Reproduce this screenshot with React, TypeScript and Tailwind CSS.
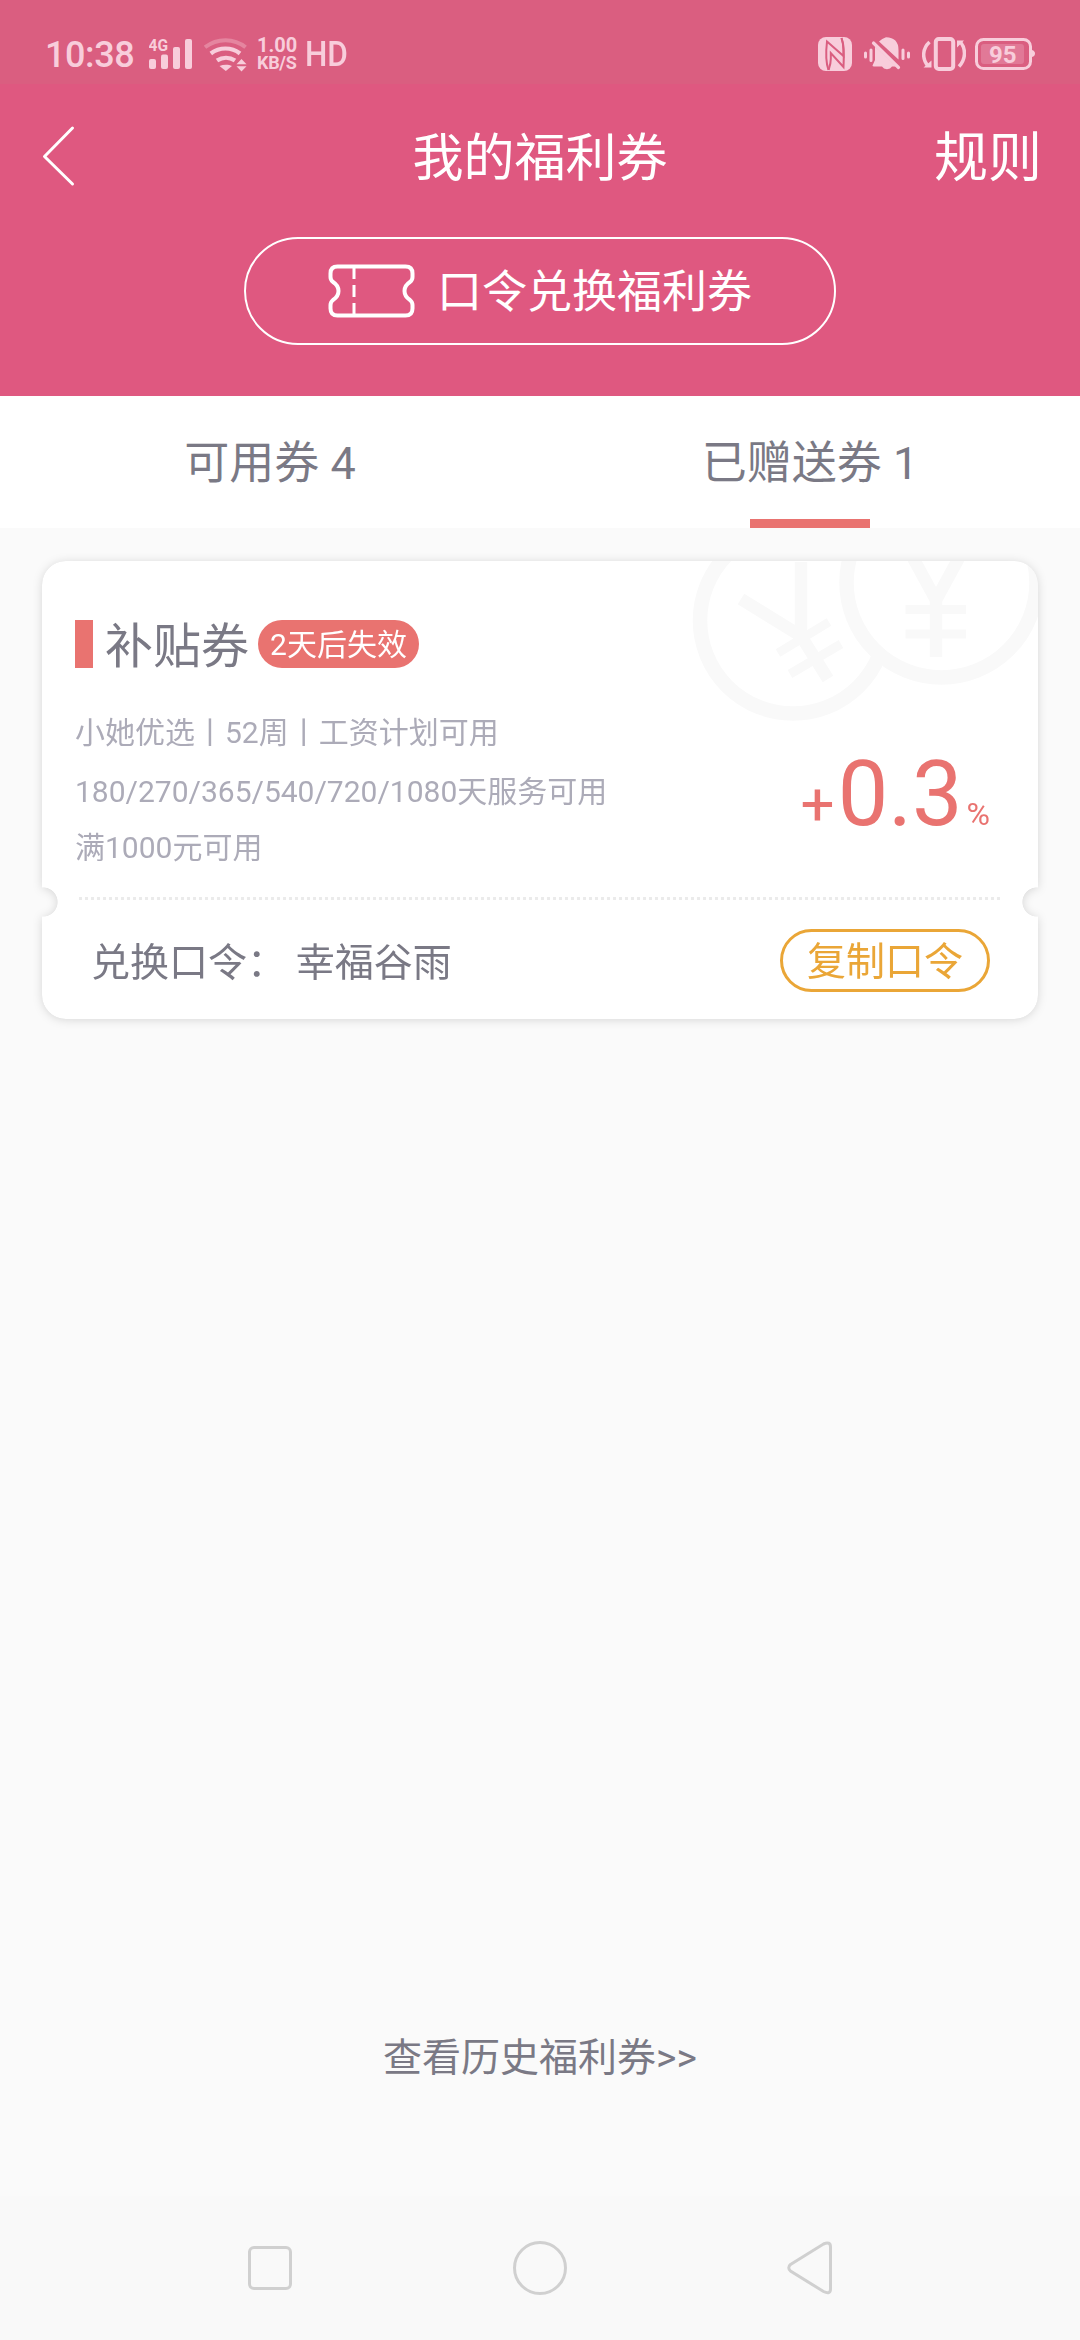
import type { ReactNode } from "react";

function SignalIcon() {
  return (
    <svg className="h-9 w-11" viewBox="149 36 44 36" fill="currentColor">
      <text x="148.5" y="51" fontSize="16.5" fontWeight="700" textLength="19.5" lengthAdjust="spacingAndGlyphs">4G</text>
      <rect x="149" y="59" width="7" height="10" rx="2" />
      <rect x="161" y="54.5" width="7" height="14.5" rx="2" />
      <rect x="173" y="47" width="7" height="22" rx="2" />
      <rect x="185" y="39" width="7" height="30" rx="2" />
    </svg>
  );
}

function WifiIcon() {
  return (
    <svg className="h-9 w-[44px]" viewBox="204 36 44 36" fill="none" stroke="currentColor">
      <path d="M205 47.3C217 37.8 234 37.8 245.6 47.3" strokeWidth="4" opacity=".35" />
      <path d="M210.8 53.5C219.5 46.8 231.5 46.8 240 53.5" strokeWidth="4.2" />
      <path d="M217 60.6C222.5 56.8 229.5 56.8 235 60.6" strokeWidth="4.2" />
      <path d="M219.5 66C223.5 64.2 228.5 64.2 232 66L225.8 71Z" fill="currentColor" stroke="none" />
      <path d="M236.5 64.3L241.5 59L246.5 64.3ZM236.5 66.3H246.5L241.5 71.5Z" fill="currentColor" stroke="none" />
    </svg>
  );
}

function NfcIcon() {
  return (
    <svg className="h-9 w-[34px]" viewBox="818 36 34 36">
      <rect x="818" y="37" width="34" height="34" rx="8" fill="currentColor" />
      <path d="M828.5 70C826 63 826 50 827 41.5L843.5 56V50C843.5 45 842.8 41.5 841.5 38" fill="none" stroke="#da5e80" strokeWidth="2" />
      <path d="M841.5 38C844.5 46 844 58 843.5 67L830.8 53V59C830.8 64 829.5 67 828.5 70" fill="none" stroke="#da5e80" strokeWidth="2" />
    </svg>
  );
}

function MutedBellIcon() {
  return (
    <svg className="h-9 w-[46px]" viewBox="864 36 46 36" fill="none" stroke="currentColor" strokeLinecap="round">
      <path d="M875 49V60L872.5 65.5Q872.5 66.5 874 66.5H882A5.5 4.5 0 0 0 892 66.5H896L875 46.5ZM879 41.5Q882 38.5 886 37.2Q898.5 37.5 898.5 50V59.5Z" fill="currentColor" stroke="none" />
      <path d="M873.5 43L898.5 67.5" strokeWidth="3.2" />
      <path d="M865.5 53V57M871 50V60.5M903 50V58.5M908.5 53V57" strokeWidth="3" />
    </svg>
  );
}

function VibrateIcon() {
  return (
    <svg className="h-9 w-11" viewBox="922 36 44 36" fill="none" stroke="currentColor">
      <rect x="935.8" y="39" width="17.4" height="30" rx="3" strokeWidth="4" />
      <path d="M929.5 42C922 49 922 59 928 66M959 66.5C966 59 966 49 960.5 42" strokeWidth="3.5" />
      <path d="M923.5 67.5H931.5V60.5ZM957 47.5V40.5H964Z" fill="currentColor" stroke="none" />
    </svg>
  );
}

function BatteryIcon() {
  return (
    <svg className="h-9 w-[60px]" viewBox="975 36 60 36">
      <rect x="976.5" y="39.5" width="54" height="29" rx="7" fill="none" stroke="currentColor" strokeWidth="3" />
      <rect x="981" y="44" width="43" height="20" rx="3" fill="currentColor" opacity=".25" />
      <path d="M1032 50Q1035 51 1035 53.5Q1035 56 1032 57Z" fill="currentColor" />
      <text x="1002.7" y="62.8" textAnchor="middle" fontSize="24" fontWeight="700" fill="currentColor">95</text>
    </svg>
  );
}

function StatusBar() {
  return (
    <div className="flex h-[84px] items-center bg-[#da5e80] px-[45px] pt-6 text-[#f8cddb]">
      <span className="w-[104px] pt-0.5 text-[36px] leading-9 font-medium tracking-[-0.4px]">10:38</span>
      <SignalIcon />
      <div className="ml-[11px] flex"><WifiIcon /></div>
      <div className="ml-[9px] w-[48px] pt-px font-bold">
        <div className="text-[20px] leading-[17px]">1.00</div>
        <div className="text-[18px] leading-[18px] tracking-[-0.3px]">KB/S</div>
      </div>
      <span className="origin-left scale-x-90 pt-0.5 text-[35px] leading-9 font-medium">HD</span>
      <div className="ml-auto flex">
        <NfcIcon />
        <div className="ml-3 flex"><MutedBellIcon /></div>
        <div className="ml-3 flex"><VibrateIcon /></div>
        <div className="ml-[9px] flex"><BatteryIcon /></div>
      </div>
    </div>
  );
}

function TicketIcon() {
  return (
    <svg className="h-[54px] w-[87px]" viewBox="0 0 87 54" fill="none" stroke="currentColor" strokeWidth="4">
      <path d="M9.5 2.5H77.5Q84.5 2.5 84.5 9.5V13Q84.5 16 82 18Q76.500 21.500 76.500 27T82 36Q84.5 38 84.5 41V44.5Q84.5 51.5 77.5 51.5H9.5Q2.5 51.5 2.5 44.5V41Q2.5 38 5 36Q10.500 32.500 10.500 27T5 18Q2.5 16 2.5 13V9.5Q2.5 2.5 9.5 2.5Z" strokeLinejoin="round" />
      <path d="M26 4V15M26 21V33M26 39V50" strokeWidth="3" />
    </svg>
  );
}

function Header() {
  return (
    <header className="h-[312px] bg-[#df5880] text-white">
      <div className="grid h-[144px] grid-cols-[1fr_auto_1fr] items-center px-[42px]">
        <svg className="h-[62px] w-[34px]" viewBox="0 0 34 62" fill="none" stroke="currentColor" strokeWidth="3" strokeLinecap="round" strokeLinejoin="round">
          <path d="M30.5 3L2.5 31.5L30.5 59" />
        </svg>
        <h1 className="pt-[5px] text-[51px] leading-[60px]">我的福利券</h1>
        <button className="-mr-1 justify-self-end pt-[5px] text-[54px] leading-[60px]">规则</button>
      </div>
      <button className="mx-auto mt-[9px] flex h-[108px] w-[592px] items-center rounded-full border-2 border-white pl-[82px]">
        <TicketIcon />
        <span className="ml-[22px] pt-1 text-[45px] leading-[54px]">口令兑换福利券</span>
      </button>
    </header>
  );
}

function Tab({ children, active }: { children: ReactNode; active?: boolean }) {
  return (
    <div className="flex flex-1 flex-col items-center justify-between">
      <span className="pt-[41px] text-[45px] leading-[54px]">{children}</span>
      {active && <span className="h-[9px] w-[120px] bg-[#e97370]" />}
    </div>
  );
}

// faint yen coins in the top right corner of the card
function Coins() {
  return (
    <svg className="absolute top-0 right-0 h-[165px] w-[358px]" viewBox="680 561 358 165" fill="none" stroke="#f9f9f9" strokeWidth="12.5">
      <circle cx="793" cy="620.5" r="93" strokeWidth="14.5" />
      <path d="M741 599L801 636L828 679M801 636V562" />
      <path d="M778 653L829 622M790 674L841 644" strokeWidth="9" />
      <circle cx="941.5" cy="582.5" r="95" fill="#fff" strokeWidth="14.5" />
      <path d="M912 556L936 600L960 556M936 596V657" />
      <path d="M905.5 609.5H966M905.5 634H966" strokeWidth="9" />
    </svg>
  );
}

// the mask cuts a round notch out of each side, level with the dotted line
function CouponCard() {
  return (
    <section className="relative mx-[42px] mt-[33px] h-[458px] overflow-hidden rounded-[24px] bg-white [mask:radial-gradient(circle_15px_at_1px_341px,transparent_95%,#000)_left/50%_100%_no-repeat,radial-gradient(circle_15px_at_calc(100%-1px)_341px,transparent_95%,#000)_right/50%_100%_no-repeat]">
      <Coins />
      <div className="relative flex h-[336px] justify-between pr-[48px] pl-[33px]">
        <div>
          <div className="flex items-center pt-[59px]">
            <span className="h-12 w-[18px] bg-[#e97370]" />
            <h2 className="ml-3 pt-[5px] text-[48px] leading-[43px]">补贴券</h2>
            <span className="ml-[9px] flex h-12 items-center rounded-full bg-[#e97370] px-3 pt-0.5 text-[30px] leading-none text-white">2天后失效</span>
          </div>
          <div className="mt-[37px] text-[30px] leading-[56px] text-[#acabb8]">
            <p>小她优选丨52周丨工资计划可用</p>
            <p className="mt-[3px]">180/270/365/540/720/1080天服务可用</p>
            <p>满1000元可用</p>
          </div>
        </div>
        <div className="flex items-baseline self-start pt-[184px] leading-[100px] text-[#e97370]">
          <span className="text-[60px] leading-none">+</span>
          <span className="ml-[3px] text-[90px]">0.3</span>
          <span className="ml-[4px] text-[32px] leading-none">%</span>
        </div>
      </div>

      <div className="mr-[37px] ml-[37px] h-[3px] bg-[repeating-linear-gradient(90deg,#ebebeb_0_3px,transparent_3px_6px)]" />

      <div className="mt-[29px] flex h-[63px] items-center justify-between pr-[48px] pl-[49px] text-[39px]">
        <p className="pt-[5px] whitespace-pre">兑换口令： 幸福谷雨</p>
        <button className="flex h-[63px] w-[210px] items-center justify-center rounded-full border-3 border-[#eaa637] pt-1 text-[#eaa637]">复制口令</button>
      </div>
    </section>
  );
}

function NavBar() {
  return (
    <nav className="flex h-[144px] items-center justify-between bg-[#f9f9f9] pr-[247px] pl-[248px] text-[#d0d0d0]">
      <span className="size-[44px] rounded-[6px] border-3 border-current" />
      <span className="size-[54px] rounded-full border-3 border-current" />
      <svg className="h-[54px] w-[46px]" viewBox="0 0 46 54" fill="none" stroke="currentColor" strokeWidth="3">
        <path d="M3.5 23.5L36.5 3Q43.5 0 43.5 6V48Q43.5 54 36.5 50.5L3.5 30Q0 26.5 3.5 23.5Z" />
      </svg>
    </nav>
  );
}

export default function App() {
  return (
    <div className="flex h-[2340px] w-[1080px] flex-col bg-[#fafafa] font-['Roboto','Noto_Sans_CJK_SC',sans-serif] text-[#7a7985]">
      <StatusBar />
      <Header />
      <div className="flex h-[132px] bg-white">
        <Tab>可用券 4</Tab>
        <Tab active>已赠送券 1</Tab>
      </div>
      <div className="drop-shadow-[0_1px_5px_rgba(0,0,0,0.14)]">
        <CouponCard />
      </div>
      <a className="mt-auto mb-[111px] text-center text-[39px] leading-[54px]">查看历史福利券&gt;&gt;</a>
      <NavBar />
    </div>
  );
}
